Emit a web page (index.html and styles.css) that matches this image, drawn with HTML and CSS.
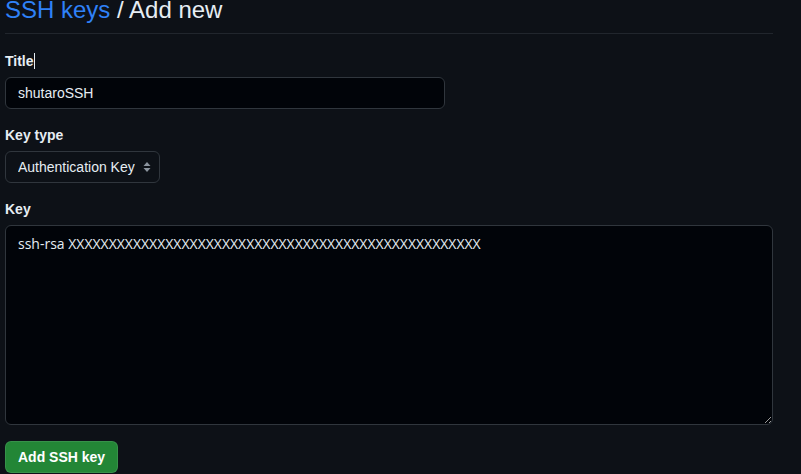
FILE: index.html
```html
<!DOCTYPE html>
<html lang="en">
<head>
    <meta charset="UTF-8" />
    <title>SSH keys / Add new</title>
    <link rel="stylesheet" href="styles.css">
</head>
<body>
    <div class="page">
        <div class="subhead">
            <h2><a href="#">SSH keys</a> / Add new</h2>
        </div>

        <form class="ssh-form">
            <div class="form-group">
                <label for="title">Title<span class="caret"></span></label>
                <input type="text" id="title" class="title-input" value="shutaroSSH">
            </div>

            <div class="form-group">
                <label for="keytype">Key type</label>
                <span class="select-wrap">
                    <select id="keytype">
                        <option value="authentication">Authentication Key</option>
                        <option value="signing">Signing Key</option>
                    </select>
                    <!-- pfeile vom select -->
                    <svg class="select-arrows" width="8" height="12" viewBox="0 0 8 12">
                        <path d="M4 1 L7.5 5 H0.5 Z" fill="#8b949e"/>
                        <path d="M4 11 L7.5 7 H0.5 Z" fill="#8b949e"/>
                    </svg>
                </span>
            </div>

            <div class="form-group">
                <label for="key">Key</label>
                <textarea id="key">ssh-rsa XXXXXXXXXXXXXXXXXXXXXXXXXXXXXXXXXXXXXXXXXXXXXXXXXXX</textarea>
            </div>

            <button type="button" class="btn-primary">Add SSH key</button>
        </form>
    </div>
</body>
</html>
```

FILE: styles.css
```css
* {
    margin: 0;
    padding: 0;
    box-sizing: border-box;
}

body {
    background-color: #0d1117;
    color: #e6edf3;
    font-family: "Liberation Sans", Arial, sans-serif;
    font-size: 14px;
    line-height: 20px;
    overflow: hidden;
}

/* seite ist etwas nach unten gescrollt */
.page {
    width: 773px;
    margin-top: -5px;
    padding-left: 5px;
}

.subhead {
    border-bottom: 1px solid #21262d;
    padding-bottom: 8px;
    margin-bottom: 17px;
}

.subhead h2 {
    font-size: 24px;
    font-weight: 400;
    line-height: 30px;
    color: #e6edf3;
}

.subhead h2 a {
    color: #2f81f7;
    text-decoration: none;
}

.form-group {
    margin-bottom: 16px;
}

label {
    display: block;
    font-weight: bold;
    margin-bottom: 6px;
}

.caret {
    display: inline-block;
    width: 1px;
    height: 16px;
    background-color: #e6edf3;
    vertical-align: -3px;
}

input, select, textarea {
    font-family: inherit;
    font-size: 14px;
    line-height: 20px;
    color: #e6edf3;
    background-color: #010409;
    border: 1px solid #30363d;
    border-radius: 6px;
    outline: none;
}

.title-input {
    display: block;
    width: 440px;
    height: 32px;
    padding: 5px 12px;
}

.select-wrap {
    position: relative;
    display: inline-block;
}

select {
    appearance: none;
    -webkit-appearance: none;
    height: 32px;
    padding: 5px 24px 5px 12px;
    background-color: #0d1117;
    display: block;
}

.select-arrows {
    position: absolute;
    right: 9px;
    top: 10px;
    pointer-events: none;
}

/* schmaleres X wie im original */
textarea {
    display: block;
    width: 768px;
    height: 200px;
    padding: 8px 12px;
    font-family: "Open Sans", "Liberation Sans", sans-serif;
    resize: vertical;
}

.btn-primary {
    height: 32px;
    padding: 0 12px;
    font-family: inherit;
    font-size: 14px;
    font-weight: bold;
    color: #ffffff;
    background-color: #238636;
    border: 1px solid rgba(240, 246, 252, 0.1);
    border-radius: 6px;
    cursor: pointer;
}
```
